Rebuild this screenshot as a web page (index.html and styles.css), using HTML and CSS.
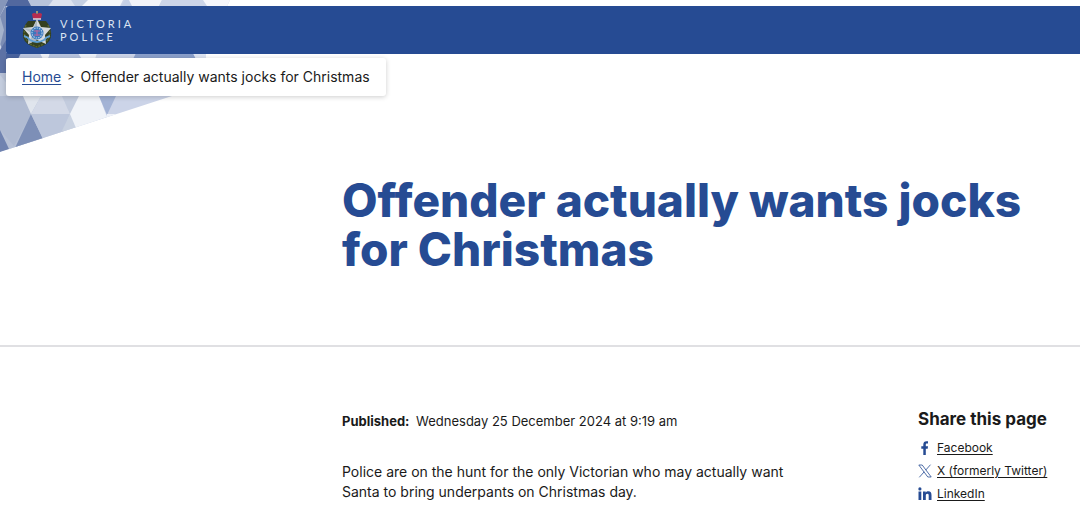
FILE: index.html
```
<!DOCTYPE html>
<html lang="en">
<head>
  <meta charset="UTF-8">
  <meta name="viewport" content="width=device-width, initial-scale=1.0">
  <title>Offender actually wants jocks for Christmas | Victoria Police</title>
  <link rel="stylesheet" href="styles.css">
</head>
<body>
  <div class="page-top">
    <svg class="pattern" width="230" height="152" viewBox="0 0 230 152" aria-hidden="true">
      <defs>
        <clipPath id="wedge"><path d="M0 0H230L206 50V58L172 96L0 152Z"/></clipPath>
      </defs>
      <g clip-path="url(#wedge)">
        <path fill="#ccd4e8" d="M0 0H230V152H0Z"/>
        <!-- strip above the header -->
        <path fill="#8696ba" d="M0 0H8L0 16Z"/>
        <path fill="#52689f" d="M8 0H28L32 6H5Z"/>
        <path fill="#b7c3db" d="M28 0H53L48 6H31Z"/>
        <path fill="#dde3ef" d="M53 0H75L80 6H49Z"/>
        <path fill="#c5d0e3" d="M71 0H90L86 6H75Z"/>
        <path fill="#f4f6fa" d="M88 0H123L120 6H82Z"/>
        <path fill="#c5d0e6" d="M125 0H129L132 6H121Z"/>
        <path fill="#f1f3f9" d="M129 0H162L159 6H132Z"/>
        <path fill="#ccd5e8" d="M162 0H203L207 6H159Z"/>
        <path fill="#f5f6fb" d="M203 0H230V6H207Z"/>
        <!-- left edge -->
        <path fill="#7c8db4" d="M0 16L6 5V58L0 44Z"/>
        <path fill="#a5b3cc" d="M0 16L4 30L0 46Z"/>
        <path fill="#5d72a5" d="M0 50L6 40V73H0Z"/>
        <!-- strip between header and breadcrumbs -->
        <path fill="#4a649f" d="M6 53H22L19 59H6Z"/>
        <path fill="#b9c4dd" d="M21 53H40L43 59H18Z"/>
        <path fill="#eef1f7" d="M40 53H50L48 59H43Z"/>
        <path fill="#b7c4de" d="M50 53H78L82 59H48Z"/>
        <path fill="#edf1f8" d="M78 53H97L95 59H82Z"/>
        <path fill="#8a9fcb" d="M136 53H193L196 59H133Z"/>
        <path fill="#dde4f2" d="M193 53H206V59H196Z"/>
        <!-- facets below the breadcrumbs -->
        <path fill="#b7c1d6" d="M0 73H23L44 114V140L0 152Z"/>
        <path fill="#c3ccdd" d="M0 75L31 114L0 104Z"/>
        <path fill="#b0bbd2" d="M0 96H23L31 114L14 146L0 130Z"/>
        <path fill="#7083b0" d="M0 130L9 149L0 152Z"/>
        <path fill="#e0e5ed" d="M23 96H41L31 114Z"/>
        <path fill="#d3d9e7" d="M41 96H62L70 114H31Z"/>
        <path fill="#c3ccde" d="M62 96H79L70 114Z"/>
        <path fill="#7d8fb7" d="M31 114L43 139L15 148Z"/>
        <path fill="#bdc7dc" d="M31 114H70L62 134L43 139Z"/>
        <path fill="#c9d2e1" d="M70 114L76 128L61 133Z"/>
        <path fill="#f0f3f8" d="M79 96H99L107 117L76 128L70 114Z"/>
        <path fill="#a3b3d5" d="M99 96H116L107 115Z"/>
        <path fill="#eef1f8" d="M107 114H119L106 118Z"/>
      </g>
    </svg>
    <header class="site-header">
      <a class="logo" href="#" aria-label="Victoria Police">
        <svg class="crest" width="30" height="38" viewBox="0 0 30 38" aria-hidden="true">
          <path d="M6 10Q0 17 1 26Q3 34 15 37Q27 34 29 26Q30 17 24 10Z" fill="#34401f"/>
          <path d="M4 14Q0 24 6 31M26 14Q30 24 24 31M8 33L15 36L22 33" fill="none" stroke="#56632f" stroke-width="1.500" stroke-dasharray="2 1"/>
          <path d="M15 8L19 16L29 17L23 24L24 33L15 29L6 33L7 24L1 17L11 16Z" fill="#d5dade"/>
          <path d="M15 8V29L6 33L11 23L1 17L11 18Z" fill="#aebac2"/>
          <path d="M2 25Q6 26 8 29Q15 33 22 29Q24 26 28 25" fill="none" stroke="#5d9fd5" stroke-width="2"/>
          <circle cx="15" cy="22" r="6.500" fill="#3a78bd"/>
          <circle cx="15" cy="22" r="5" fill="none" stroke="#a9cbe6" stroke-width="1.200" stroke-dasharray="1.500 1"/>
          <path d="M12 20H18M12 24H18M15 19V25" stroke="#b7669c" stroke-width="1.200"/>
          <path d="M10 3Q12 1 15 3Q18 1 20 3L19 8H11Z" fill="#b72c50"/>
          <path d="M14 1H16M15 0V3" stroke="#c6b46a"/>
          <path d="M11 8H19" stroke="#e0d7dc" stroke-width="1.500"/>
        </svg>
        <span class="logo-text">VICTORIA<br>POLICE</span>
      </a>
    </header>
    <nav class="breadcrumbs" aria-label="Breadcrumb">
      <a href="#">Home</a>
      <span class="separator">&gt;</span>
      <span>Offender actually wants jocks for Christmas</span>
    </nav>
  </div>

  <div class="hero">
    <h1>Offender actually wants jocks for Christmas</h1>
  </div>

  <div class="content">
    <main class="article">
      <p class="published"><strong>Published:</strong> Wednesday 25 December 2024 at 9:19 am</p>
      <p class="intro">Police are on the hunt for the only Victorian who may actually want Santa to bring underpants on Christmas day.</p>
    </main>
    <aside class="share">
      <h2>Share this page</h2>
      <ul>
        <li>
          <svg width="14" height="14" viewBox="0 0 14 14" aria-hidden="true"><path fill="#264b93" d="M5.300 14V7.700H3.300V5.200H5.300V3.600C5.300 1.300 6.500.2 8.400.2L10 .3V2.500H8.900C8 2.500 7.800 3 7.800 3.700V5.200H10L9.700 7.700H7.800V14Z"/></svg>
          <a href="#">Facebook</a>
        </li>
        <li>
          <svg width="14" height="14" viewBox="0 0 14 14" aria-hidden="true"><path fill="none" stroke="#264b93" stroke-width=".8" d="M.8 1H4.200L13.200 13H9.800ZM12.500.7L7.700 6.100M6.200 7.800L1.300 13.300"/></svg>
          <a href="#">X (formerly Twitter)</a>
        </li>
        <li>
          <svg width="14" height="14" viewBox="0 0 14 14" aria-hidden="true"><path fill="#264b93" d="M.5 4.500H3.300V13H.5ZM5 4.500H7.700V5.700C8.300 4.700 9.200 4.300 10.300 4.300C12.800 4.300 13.500 5.900 13.500 8.200V13H10.700V8.700C10.700 7.500 10.500 6.700 9.400 6.700C8.200 6.700 7.800 7.500 7.800 8.700V13H5Z"/><circle cx="1.900" cy="1.900" r="1.600" fill="#264b93"/></svg>
          <a href="#">LinkedIn</a>
        </li>
      </ul>
    </aside>
  </div>
</body>
</html>
```
FILE: styles.css
```
* {
  box-sizing: border-box;
}
body {
  margin: 0;
  background-color: #fff;
  color: #1a1a1a;
  font-family: Inter, Arial, sans-serif;
  font-size: 14px;
  line-height: 20px;
}
h1, h2, p, ul {
  margin: 0;
  padding: 0;
}
.page-top {
  position: relative;
  padding: 6px 0 0 6px;
}
.pattern {
  position: absolute;
  top: 0;
  left: 0;
}
.site-header {
  position: relative;
  display: flex;
  align-items: center;
  height: 48px;
  padding: 0 16px;
  background-color: #264b93;
  border-radius: 3px 0 0 3px;
}
.logo {
  display: flex;
  align-items: center;
  gap: 8px;
  color: #dce4f2;
  text-decoration: none;
}
.logo-text {
  font-family: Lato, sans-serif;
  font-size: 11px;
  line-height: 13px;
  letter-spacing: 3px;
}
.breadcrumbs {
  position: relative;
  display: flex;
  align-items: center;
  gap: 6px;
  width: fit-content;
  height: 38px;
  margin-top: 4px;
  padding: 0 16px;
  background-color: #fff;
  border-radius: 3px;
  box-shadow: 0 1px 5px rgba(0, 0, 0, 0.2);
}
.breadcrumbs a {
  color: #264b93;
  text-underline-offset: 2px;
}
.separator {
  font-size: 11px;
}
.hero {
  padding: 80px 48px 71px 342px;
  border-bottom: 2px solid #e0e0e3;
}
h1 {
  color: #264b93;
  font-size: 46px;
  line-height: 49px;
  font-weight: 800;
}
.content {
  display: flex;
  justify-content: space-between;
  padding: 62px 32px 0 342px;
}
.article {
  flex: 0 1 460px;
}
.published {
  padding-top: 2px;
  margin-bottom: 31px;
  font-size: 13px;
}
.published strong {
  margin-right: 3px;
}
.share {
  flex: 0 0 130px;
}
.share h2 {
  font-size: 17px;
  line-height: 20px;
  margin-bottom: 7px;
  white-space: nowrap;
}
.share ul {
  list-style: none;
}
.share li {
  display: flex;
  align-items: center;
  gap: 5px;
  height: 23px;
  font-size: 12px;
  white-space: nowrap;
}
.share a {
  color: #1a1a1a;
  text-underline-offset: 2px;
}
```
